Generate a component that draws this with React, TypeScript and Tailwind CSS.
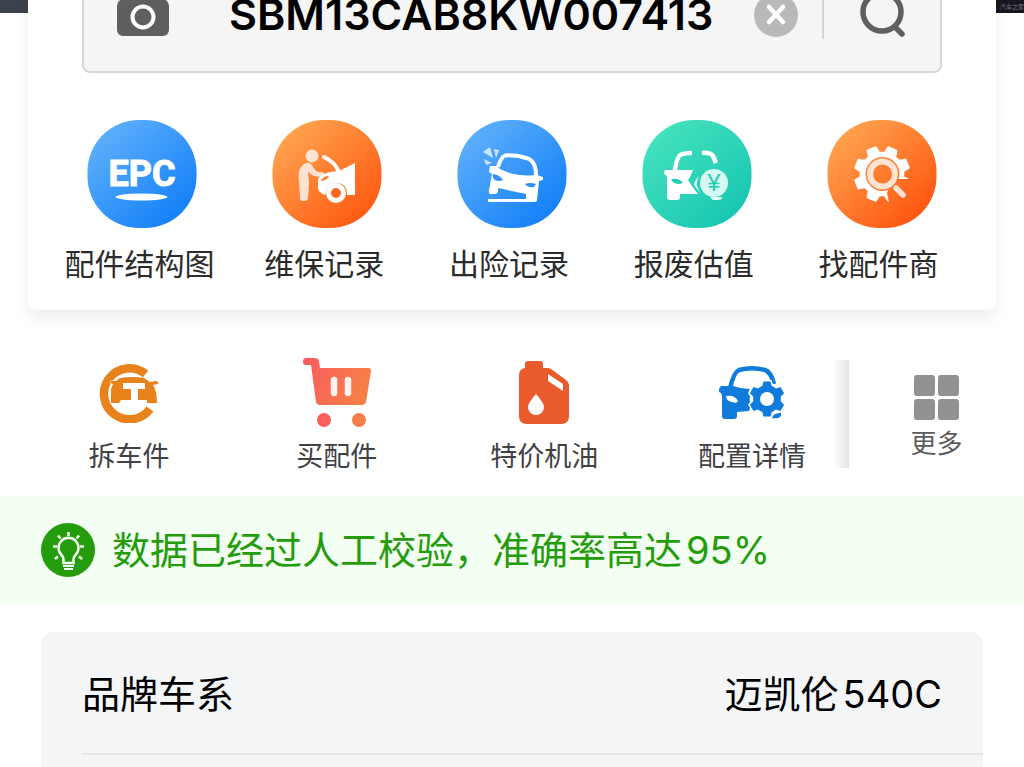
import React from "react";

const FONT = "font-['Inter','Noto_Sans_CJK_SC',sans-serif]";

const gearPath = (cx: number, cy: number, teeth: number, outer: number, inner: number, start: number) => {
  const step = (Math.PI * 2) / teeth;
  const points: string[] = [];
  for (let i = 0; i < teeth; i++) {
    const a = start + i * step;
    [
      [a - step * 0.32, inner],
      [a - step * 0.19, outer],
      [a + step * 0.19, outer],
      [a + step * 0.32, inner],
    ].forEach(([angle, r]) => {
      points.push(`${(cx + r * Math.cos(angle)).toFixed(1)} ${(cy + r * Math.sin(angle)).toFixed(1)}`);
    });
  }
  return `M${points.join("L")}z`;
};

const CameraIcon = () => (
  <svg width="52" height="44" viewBox="0 0 52 44">
    <path
      d="M7 7h9l3-5h14l3 5h9a7 7 0 0 1 7 7v24a6 6 0 0 1-6 6H6a6 6 0 0 1-6-6V14a7 7 0 0 1 7-7z"
      fill="#5f5f5f"
    />
    <circle cx="26" cy="25" r="10.500" fill="none" stroke="#fff" strokeWidth="4" />
  </svg>
);

const ClearIcon = () => (
  <svg width="44" height="46" viewBox="0 0 44 46">
    <circle cx="22" cy="24" r="22" fill="#b9b9bb" />
    <path d="M15 16l14 15M29 16L15 31" stroke="#fff" strokeWidth="4.500" strokeLinecap="round" />
  </svg>
);

const SearchIcon = () => (
  <svg width="46" height="48" viewBox="0 0 46 48" fill="none" stroke="#5f5f5f">
    <circle cx="22" cy="22" r="19" strokeWidth="5.500" />
    <path d="M36 38l6 6" strokeWidth="5.500" strokeLinecap="round" />
  </svg>
);

type BadgeProps = {
  id: string;
  from: string;
  to: string;
  children: React.ReactNode;
};

const Badge = ({ id, from, to, children }: BadgeProps) => (
  <svg width="110" height="109" viewBox="0 0 110 109">
    <defs>
      <linearGradient id={id} x1="0.1" y1="0.1" x2="0.85" y2="0.9">
        <stop offset="0" stopColor={from} />
        <stop offset="1" stopColor={to} />
      </linearGradient>
    </defs>
    <rect x="0.500" width="109" height="108" rx="51.500" fill={`url(#${id})`} />
    {children}
  </svg>
);

const EpcIcon = () => (
  <Badge id="epc" from="#5fb0fb" to="#1480f8">
    <text
      x="55"
      y="66"
      textAnchor="middle"
      fill="#fff"
      stroke="#fff"
      strokeWidth="1"
      className="font-['Liberation_Sans_Narrow','Roboto',sans-serif] text-[36px] font-bold"
    >
      EPC
    </text>
    <ellipse cx="54.500" cy="77" rx="26" ry="3.500" fill="#fff" />
  </Badge>
);

const RepairIcon = () => (
  <Badge id="repair" from="#ffa550" to="#fe5a12">
    <g fill="#ffe3d2">
      <circle cx="40" cy="36" r="6.500" />
      <path d="M34 43q5-1 7 4l3 4q5 2 7 1 2 2 0 4-6 2-11-1l-4-3 1 11-1 16q-1 2-4 2-4 0-4-2l-1-18q-2-14 7-18z" />
    </g>
    <path d="M52 37q11 5 15 15" fill="none" stroke="#fff" strokeWidth="4" strokeLinecap="round" />
    <path
      d="M46 59q3-5 12-7l9-1 16-8v32h-8q0-12-11-12-9 1-11 12-7-3-7-7z"
      fill="#fff"
    />
    <path d="M49 60q3-4 8-4-1 4-8 5z" fill="#fd7b33" />
    <circle cx="64" cy="73" r="7.500" fill="#fd6924" stroke="#fff" strokeWidth="5" />
  </Badge>
);

const CrashIcon = () => (
  <Badge id="crash" from="#5fb0fb" to="#1480f8">
    <g fill="#cfe5ff">
      <path d="M33 27l3 11-10-6z" />
      <path d="M37 29l5 1-3 8z" />
      <path d="M27 39l8 4-6 2z" />
    </g>
    <path
      d="M41 47q3-10 7-11.500 11-1 23 3 8 3 8 17"
      fill="none"
      stroke="#fff"
      strokeWidth="4"
    />
    <path
      d="M33 46h7l3 3q15 8 37 6l6 2v3l-4 1-2 19q0 2-2 2H31v-3h38v-5l-28-6v3q0 3-4 3h-4q-2-1-1-4l3-16-3-2z"
      fill="#fff"
    />
    <path d="M36 54q7 1 10 6-4 2-8 0-3-2-2-6zM68 64q5-2 11 0l-2 3q-6 1-9-3z" fill="#358ff9" />
  </Badge>
);

const ScrapIcon = () => (
  <Badge id="scrap" from="#45e2bd" to="#18c7b2">
    <path
      d="M33 50q2-14 6-15.500 4-1.500 11-1.500M60 33q8-1 11 3l3 7"
      fill="none"
      stroke="#fff"
      strokeWidth="4.500"
    />
    <path
      d="M23 50h28l-3 7-2 3 6 9 4 5H38v3q0 3-3 3h-7q-3 0-3-3V56l-3-2q0-3 1-4z"
      fill="#fff"
    />
    <path d="M29 59q9-1 12 4-9 3-12-4z" fill="#28cfb5" />
    <path d="M57 56q-5 8 2 18l-7-9q0-4 5-9z" fill="#e5fbf7" />
    <path d="M68 77h12q0 3-3 3h-6z" fill="#e5fbf7" />
    <circle cx="72" cy="63" r="14" fill="#d6f8f2" />
    <text
      x="72"
      y="71"
      textAnchor="middle"
      fill="#20cbb3"
      className="font-['Liberation_Sans',sans-serif] text-[23px]"
    >
      ¥
    </text>
  </Badge>
);

const DealerIcon = () => (
  <Badge id="dealer" from="#ffa550" to="#fe5510">
    <mask id="dealer-cut">
      <rect width="110" height="109" fill="#fff" />
      <circle cx="55.500" cy="54" r="17" fill="#000" />
      <path d="M66 59h26v33H64l-4-19z" fill="#000" />
    </mask>
    <path
      d={gearPath(55, 54, 8, 27, 21, Math.PI / 8)}
      fill="#fff"
      stroke="#fff"
      strokeWidth="3"
      strokeLinejoin="round"
      mask="url(#dealer-cut)"
    />
    <circle cx="55.500" cy="54" r="12.500" fill="none" stroke="#ffe3d2" strokeWidth="6" />
    <path d="M69 68l7 7" stroke="#ffe3d2" strokeWidth="5.500" strokeLinecap="round" />
  </Badge>
);

const PartsIcon = () => (
  <svg width="60" height="60" viewBox="0 0 60 60">
    <path
      d="M46.500 11A25.500 25.500 0 1 0 51 46"
      fill="none"
      stroke="#e8821b"
      strokeWidth="8.500"
    />
    <path
      d="M12 18h5l4-3q12-2 24 0l6 4 6-1q3 1 2 3l-5 1q4 6 4 18H47l-3-3H22l-2 3h-8V26l2-5-3-1z"
      fill="#e8821b"
      stroke="#fff"
      strokeWidth="1"
      paintOrder="stroke"
    />
    <path d="M24 20h22v6h-7v11h9v4H22v-4h10V26h-8z" fill="#fff" />
  </svg>
);

const CartIcon = () => (
  <svg width="70" height="70" viewBox="0 0 70 70">
    <defs>
      <linearGradient id="cart" x1="0" y1="0" x2="1" y2="0.300">
        <stop offset="0" stopColor="#fb5a60" />
        <stop offset="1" stopColor="#f67f47" />
      </linearGradient>
    </defs>
    <path
      d="M4 0h9q3 0 4 3l1 7h49q2 0 2 3l-5 31q-1 3-4 3H18q-3 0-4-3L9 7H4Q1 7 1 3.500T4 0z"
      fill="url(#cart)"
    />
    <circle cx="22" cy="62" r="7" fill="#fb625b" />
    <circle cx="57" cy="62" r="7" fill="#f67f47" />
    <path d="M32 22v13M46 22v13" stroke="#fff3ef" strokeWidth="6.500" strokeLinecap="round" />
  </svg>
);

const OilIcon = () => (
  <svg width="50" height="64" viewBox="0 0 50 64">
    <path
      d="M9 0h12q3 0 3 3v4h4q2 0 4 1l15 11q3 2 3 5v31q0 8-8 8H8q-8 0-8-8V14q0-6 6-7V3q0-3 3-3z"
      fill="#e95b2d"
    />
    <path d="M29 13l15 10v7L29 20z" fill="#fff" />
    <path d="M17 33q8 9 8 13a8 8 0 0 1-16 0q0-4 8-13z" fill="#fff" />
  </svg>
);

const ConfigIcon = () => (
  <svg width="66" height="54" viewBox="0 0 66 54">
    <path
      d="M11 22Q15 6 20 4q13-3.500 26 0 6 2 9 14"
      fill="none"
      stroke="#0f7bdb"
      strokeWidth="4.500"
    />
    <path
      d="M2 20h12q8 3 17 3-3 4 0 7-1 6 1 9l-2 6-12 1v4q0 3-3 3H6q-3 0-3-3V30l-1-3q-3-1-2-4z"
      fill="#0f7bdb"
    />
    <path d="M7 30q9-1 12 5-1 3-6 1-6-1-6-6z" fill="#fff" />
    <path
      d={gearPath(48, 33, 6, 18, 14, Math.PI / 6)}
      fill="#0f7bdb"
      stroke="#fff"
      strokeWidth="3"
      strokeLinejoin="round"
      paintOrder="stroke"
    />
    <circle cx="48" cy="33" r="7" fill="#fff" />
    <path d="M52 53q1-7 11-7 0 7-5 7z" fill="#0f7bdb" stroke="#fff" strokeWidth="1.500" />
  </svg>
);

const MoreIcon = () => (
  <svg width="45" height="45" viewBox="0 0 45 45" fill="#929292">
    <rect width="21" height="21" rx="3" />
    <rect x="24" width="21" height="21" rx="3" />
    <rect y="24" width="21" height="21" rx="3" />
    <rect x="24" y="24" width="21" height="21" rx="3" />
  </svg>
);

const BulbIcon = () => (
  <svg width="54" height="54" viewBox="0 0 54 54" fill="none" stroke="#f3fff2">
    <circle cx="27" cy="27" r="27" fill="#249c0c" stroke="none" />
    <path
      d="M22.500 40v-4q0-2-2-4a10 10 0 1 1 14 0q-2 2-2 4v4z"
      strokeWidth="2.500"
    />
    <path d="M22 43h11M23 46h9" strokeWidth="2" />
    <path
      d="M27.500 9v4M17 12.500l2.500 3M38 12.500l-2.500 3M12 23.500h4M39 23.500h4M14 36l3-2.500M41 36l-3-2.500"
      strokeWidth="2.500"
    />
  </svg>
);

const services = [
  { label: "配件结构图", icon: <EpcIcon /> },
  { label: "维保记录", icon: <RepairIcon /> },
  { label: "出险记录", icon: <CrashIcon /> },
  { label: "报废估值", icon: <ScrapIcon /> },
  { label: "找配件商", icon: <DealerIcon /> },
];

const shortcuts = [
  { label: "拆车件", icon: <PartsIcon /> },
  { label: "买配件", icon: <CartIcon /> },
  { label: "特价机油", icon: <OilIcon /> },
  { label: "配置详情", icon: <ConfigIcon /> },
];

const SearchBar = () => (
  <form className="mx-[54px] flex h-[119px] items-center rounded-lg border-2 border-[#d6d6d7] bg-[#f5f5f6] pr-[34px] pl-[33px]">
    <button type="button" aria-label="拍照识别">
      <CameraIcon />
    </button>
    <input
      aria-label="车架号"
      defaultValue="SBM13CAB8KW007413"
      className="ml-[60px] w-0 flex-1 bg-transparent text-[43px] leading-[56px] font-semibold text-black outline-none"
    />
    <button type="button" aria-label="清空">
      <ClearIcon />
    </button>
    <span className="mx-6 h-[50px] w-[2px] bg-[#d3d3d4]" />
    <button type="submit" aria-label="搜索" className="ml-3">
      <SearchIcon />
    </button>
  </form>
);

const Services = () => (
  <nav className="mt-[47px] grid grid-cols-5 px-[22px] pb-7">
    {services.map((item) => (
      <a key={item.label} href="#" className="flex flex-col items-center">
        {item.icon}
        <span className="mt-[17px] pr-[6px] text-[30px] leading-9 whitespace-nowrap text-[#2b2b2b]">
          {item.label}
        </span>
      </a>
    ))}
  </nav>
);

const Shortcuts = () => (
  <section className="mt-12 flex">
    <nav className="flex flex-1 justify-between pr-[27px] pl-[75px]">
      {shortcuts.map((item) => (
        <a key={item.label} href="#" className="flex w-[108px] flex-col items-center">
          <span className="flex h-[70px] items-center">{item.icon}</span>
          <span className="mt-[11px] text-[27px] leading-9 whitespace-nowrap text-[#3f4145]">
            {item.label}
          </span>
        </a>
      ))}
    </nav>
    <span className="mt-[2px] h-[108px] w-4 bg-linear-to-r from-white to-[#e4e4e4]" />
    <button
      type="button"
      className="flex w-[175px] flex-col items-center pt-[17px] text-[26px] leading-9 text-[#5c5c5c]"
    >
      <MoreIcon />
      <span className="mt-[6px]">更多</span>
    </button>
  </section>
);

export default function App() {
  return (
    <div className={`flex min-h-screen flex-col overflow-hidden bg-white ${FONT}`}>
      <header className="flex h-[13px] items-center justify-end bg-linear-to-r from-[#3d434d] to-[#17151d] text-[6px] leading-3 text-[#77757c]">
        汽车之家
      </header>

      <section className="relative -mt-[73px] mx-7 rounded-lg bg-white pt-[14px] shadow-[0_8px_16px_rgba(0,0,0,0.07)]">
        <SearchBar />
        <Services />
      </section>

      <Shortcuts />

      <p className="mt-[21px] flex h-[108px] items-center bg-[#f3fff2] pl-[41px] text-[38px] leading-[54px] text-[#249c0c]">
        <BulbIcon />
        <span className="ml-[17px] whitespace-nowrap">
          数据已经过人工校验，准确率高达<span className="ml-1">95%</span>
        </span>
      </p>

      <dl className="mx-[41px] mt-7 flex-1 rounded-t-xl bg-[#f3f5f7] pl-[41px] text-[38px] leading-[54px] text-black">
        <div className="flex justify-between border-b-2 border-[#e3e5e7] pt-[35px] pr-[41px] pb-8">
          <dt>品牌车系</dt>
          <dd>
            迈凯伦<span className="ml-1">540C</span>
          </dd>
        </div>
      </dl>
    </div>
  );
}
